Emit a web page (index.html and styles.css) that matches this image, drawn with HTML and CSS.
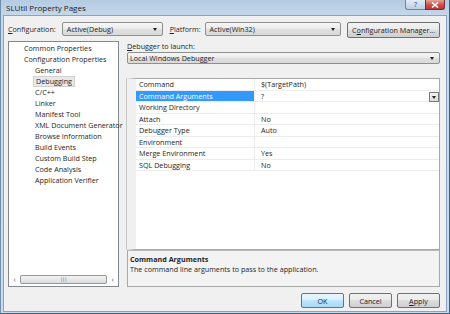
FILE: index.html
```html
<!DOCTYPE html>
<html lang="en">
<head>
    <meta charset="UTF-8">
    <title>SLUtil Property Pages</title>
    <link rel="stylesheet" href="styles.css">
</head>
<body>
<div class="window">
    <div class="titlebar">
        <span class="title">SLUtil Property Pages</span>
        <span class="cap-btn help-btn">?</span>
        <span class="cap-btn close-btn">
            <svg width="8" height="6" viewBox="0 0 8 6"><path d="M1 0.5 L7 5.5 M7 0.5 L1 5.5" stroke="#fff" stroke-width="1.6"/></svg>
        </span>
    </div>

    <div class="client">
        <div class="toolbar">
            <span class="lbl lbl-config"><u>C</u>onfiguration:</span>
            <div class="combo combo-config">Active(Debug)<span class="arrow"></span></div>
            <span class="lbl lbl-platform"><u>P</u>latform:</span>
            <div class="combo combo-platform">Active(Win32)<span class="arrow"></span></div>
            <button class="btn btn-manager">C<u>o</u>nfiguration Manager...</button>
        </div>

        <div class="main">
            <div class="tree">
                <ul class="tree-list">
                    <li class="lvl1">Common Properties</li>
                    <li class="lvl1">Configuration Properties</li>
                    <li class="lvl2">General</li>
                    <li class="lvl2"><span class="sel">Debugging</span></li>
                    <li class="lvl2">C/C++</li>
                    <li class="lvl2">Linker</li>
                    <li class="lvl2">Manifest Tool</li>
                    <li class="lvl2">XML Document Generator</li>
                    <li class="lvl2">Browse Information</li>
                    <li class="lvl2">Build Events</li>
                    <li class="lvl2">Custom Build Step</li>
                    <li class="lvl2">Code Analysis</li>
                    <li class="lvl2">Application Verifier</li>
                </ul>
                <div class="hscroll">
                    <span class="sb-arrow">&#8249;</span>
                    <div class="sb-track"><div class="sb-thumb">|||</div></div>
                    <span class="sb-arrow">&#8250;</span>
                </div>
            </div>

            <div class="pane">
                <div class="lbl lbl-debugger"><u>D</u>ebugger to launch:</div>
                <div class="combo combo-debugger">Local Windows Debugger<span class="arrow"></span></div>

                <div class="grid">
                    <div class="row"><span class="name">Command</span><span class="value">$(TargetPath)</span></div>
                    <div class="row"><span class="name selected">Command Arguments</span><span class="value">?<span class="drop"><span class="arrow"></span></span></span></div>
                    <div class="row"><span class="name">Working Directory</span><span class="value"></span></div>
                    <div class="row"><span class="name">Attach</span><span class="value">No</span></div>
                    <div class="row"><span class="name">Debugger Type</span><span class="value">Auto</span></div>
                    <div class="row"><span class="name">Environment</span><span class="value"></span></div>
                    <div class="row"><span class="name">Merge Environment</span><span class="value">Yes</span></div>
                    <div class="row"><span class="name">SQL Debugging</span><span class="value">No</span></div>
                </div>

                <div class="desc">
                    <div class="desc-title">Command Arguments</div>
                    <div class="desc-text">The command line arguments to pass to the application.</div>
                </div>
            </div>
        </div>

        <div class="footer">
            <button class="btn btn-ok">OK</button>
            <button class="btn">Cancel</button>
            <button class="btn"><u>A</u>pply</button>
        </div>
    </div>
</div>
</body>
</html>
```

FILE: styles.css
```css
* {
    margin: 0;
    padding: 0;
    box-sizing: border-box;
}

body {
    width: 450px;
    height: 314px;
    overflow: hidden;
    font-family: "Open Sans", "Noto Sans", sans-serif;
    font-size: 7.2px;
    color: #1e1e1e;
}

u {
    text-decoration: underline;
}

.window {
    width: 450px;
    height: 314px;
    display: flex;
    flex-direction: column;
    background: linear-gradient(to bottom, #b5cbe2 0px, #c6d8ea 16px, #c9dbec 100%);
    border-right: 1px solid #3d6383;
    border-bottom: 1px solid #3d6383;
    border-left: 1px solid #6f8fae;
    padding: 0 2px 2px 2px;
}

.titlebar {
    height: 15px;
    display: flex;
    align-items: flex-start;
}

.title {
    font-size: 8px;
    line-height: 15px;
    padding-left: 3px;
    color: #1a1a1a;
}

.cap-btn {
    height: 10px;
    display: flex;
    align-items: center;
    justify-content: center;
    border: 1px solid #6d87a3;
    border-top: none;
}

.help-btn {
    margin-left: auto;
    width: 20px;
    font-size: 7px;
    color: #2a4a6a;
    background: linear-gradient(to bottom, #e2ebf5, #bccfe3);
    border-right: none;
    border-radius: 0 0 0 3px;
}

.close-btn {
    width: 20px;
    margin-right: 2px;
    background: linear-gradient(to bottom, #e8a393, #c75050 55%, #b83a2e);
    border-color: #7a3030;
    border-radius: 0 0 3px 0;
}

.client {
    flex: 1;
    background-color: #f0f0f0;
    border: 1px solid #8aa4bf;
    padding: 6px 6px 3px 4px;
    display: flex;
    flex-direction: column;
}

.toolbar {
    height: 16px;
    display: flex;
    align-items: flex-start;
}

.lbl {
    line-height: 14px;
    white-space: nowrap;
}

.lbl-config {
    width: 54px;
}

.lbl-platform {
    width: 35px;
    margin-left: 7px;
}

.combo {
    position: relative;
    height: 14px;
    line-height: 12px;
    padding-left: 4px;
    border: 1px solid #8e8f8f;
    border-radius: 2px;
    background: linear-gradient(to bottom, #f6f6f6, #ebebeb 50%, #dfdfdf 51%, #dadada);
    white-space: nowrap;
}

.combo-config {
    width: 101px;
}

.combo-platform {
    width: 137px;
}

.arrow {
    position: absolute;
    right: 5px;
    top: 50%;
    margin-top: -1px;
    width: 0;
    height: 0;
    border-left: 2.5px solid transparent;
    border-right: 2.5px solid transparent;
    border-top: 3px solid #222;
}

.btn {
    font-family: "Open Sans", "Noto Sans", sans-serif;
    font-size: 7.2px;
    color: #1e1e1e;
    height: 15px;
    width: 43px;
    border: 1px solid #707070;
    border-radius: 2px;
    background: linear-gradient(to bottom, #f2f2f2, #ebebeb 45%, #dddddd 50%, #cfcfcf);
}

.btn-manager {
    width: 93px;
    height: 16px;
    margin-left: 6px;
}

.main {
    height: 246px;
    margin-top: 3px;
    display: flex;
    gap: 8px;
}

.tree {
    width: 111px;
    background: #fff;
    border: 1px solid #828790;
    display: flex;
    flex-direction: column;
}

.tree-list {
    list-style: none;
    flex: 1;
    padding-top: 1px;
}

.tree-list li {
    height: 11px;
    line-height: 11px;
    white-space: nowrap;
}

.lvl1 {
    padding-left: 15px;
}

.lvl2 {
    padding-left: 26px;
}

.sel {
    display: inline-block;
    line-height: 9px;
    margin-left: -2px;
    padding: 0 2px;
    background: #e8e8e8;
    border: 1px solid #d0d0d0;
}

.hscroll {
    height: 9px;
    margin: 0 0 2px 0;
    display: flex;
    align-items: center;
}

.sb-arrow {
    width: 11px;
    text-align: center;
    font-size: 7px;
    line-height: 9px;
    color: #444;
}

.sb-track {
    flex: 1;
    height: 9px;
    display: flex;
    background: #f0f0f0;
}

.sb-thumb {
    width: 87px;
    height: 9px;
    border: 1px solid #979797;
    border-radius: 2px;
    background: linear-gradient(to bottom, #f3f3f3, #dcdcdc);
    font-size: 5px;
    line-height: 7px;
    text-align: center;
    color: #555;
    letter-spacing: -0.5px;
}

.pane {
    flex: 1;
    display: flex;
    flex-direction: column;
}

.lbl-debugger {
    line-height: 10px;
    height: 10px;
}

.combo-debugger {
    margin-top: 1px;
    height: 12px;
    line-height: 10px;
    padding-left: 2px;
}

.grid {
    margin-top: 14px;
    height: 172px;
    background: #fff;
    border: 1px solid #a8a8a8;
    border-left: 9px solid #f0f0f0;
    box-shadow: -1px 0 0 #c8c8c8;
}

.row {
    height: 11.5px;
    display: flex;
    border-bottom: 1px solid #ececec;
}

.name {
    width: 118px;
    padding-left: 3px;
    line-height: 11px;
    white-space: nowrap;
}

.selected {
    background: #3399ff;
    color: #fff;
}

.value {
    position: relative;
    flex: 1;
    padding-left: 6px;
    line-height: 11px;
    border-left: 1px solid #ececec;
}

.drop {
    position: absolute;
    right: 0;
    top: 1px;
    width: 10px;
    height: 10px;
    border: 1px solid #7a7a7a;
    background: linear-gradient(to bottom, #f4f4f4, #dcdcdc);
}

.drop .arrow {
    right: 2px;
}

.desc {
    height: 37px;
    border: 1px solid #a8a8a8;
    border-top-color: #b8b8b8;
    background: #f3f3f3;
    padding: 3px 0 0 2px;
}

.desc-title {
    font-weight: bold;
    line-height: 10px;
}

.desc-text {
    line-height: 11px;
}

.footer {
    margin-top: 6px;
    display: flex;
    justify-content: flex-end;
    gap: 5px;
}

.btn-ok {
    border-color: #3c7fb1;
    background: linear-gradient(to bottom, #eaf6fd, #d9f0fc 45%, #bee6fd 50%, #a7d9f5);
}
```
